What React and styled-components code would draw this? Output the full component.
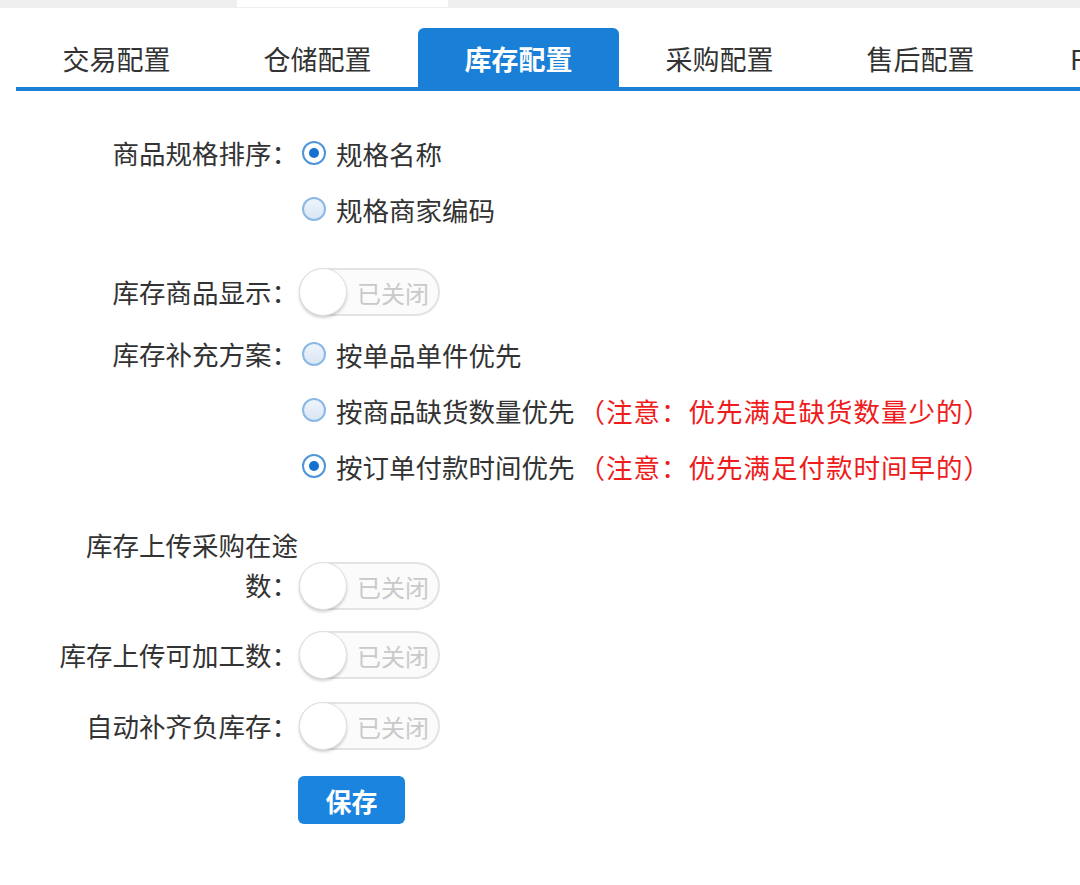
import React, { useState } from 'react';
import styled, { createGlobalStyle } from 'styled-components';

const GlobalStyle = createGlobalStyle`
  body {
    margin: 0;
    background: #fff;
    font-family: 'Noto Sans CJK SC', 'Noto Sans', sans-serif;
    color: #333;
  }
`;

const TABS = ['交易配置', '仓储配置', '库存配置', '采购配置', '售后配置', 'FBA配置'];

const App = () => {
  const [activeTab, setActiveTab] = useState(2);
  const [specSort, setSpecSort] = useState('name');
  const [plan, setPlan] = useState('payTime');
  const [switches, setSwitches] = useState({ show: false, transit: false, process: false, negative: false });

  const toggle = (key) => setSwitches((prev) => ({ ...prev, [key]: !prev[key] }));

  return (
    <Page>
      <GlobalStyle />
      <TopStrip>
        <TopTab />
      </TopStrip>

      <TabBar>
        {TABS.map((tab, i) => (
          <Tab key={tab} active={i === activeTab ? 'true' : undefined} onClick={() => setActiveTab(i)}>
            {tab}
          </Tab>
        ))}
      </TabBar>

      <Form>
        <Row>
          <Label>商品规格排序：</Label>
          <Options>
            <Option onClick={() => setSpecSort('name')}>
              <Radio checked={specSort === 'name'} />
              规格名称
            </Option>
            <Option onClick={() => setSpecSort('code')}>
              <Radio checked={specSort === 'code'} />
              规格商家编码
            </Option>
          </Options>
        </Row>

        <Row space={27}>
          <Label>库存商品显示：</Label>
          <Switch on={switches.show} onClick={() => toggle('show')} />
        </Row>

        <Row space={6}>
          <Label>库存补充方案：</Label>
          <Options>
            <Option onClick={() => setPlan('single')}>
              <Radio checked={plan === 'single'} />
              按单品单件优先
            </Option>
            <Option onClick={() => setPlan('shortage')}>
              <Radio checked={plan === 'shortage'} />
              按商品缺货数量优先<Note>（注意：优先满足缺货数量少的）</Note>
            </Option>
            <Option onClick={() => setPlan('payTime')}>
              <Radio checked={plan === 'payTime'} />
              按订单付款时间优先<Note>（注意：优先满足付款时间早的）</Note>
            </Option>
          </Options>
        </Row>

        <Row space={31} bottom>
          <Label>库存上传采购在途数：</Label>
          <Switch drop={5} on={switches.transit} onClick={() => toggle('transit')} />
        </Row>

        <Row space={22}>
          <Label>库存上传可加工数：</Label>
          <Switch on={switches.process} onClick={() => toggle('process')} />
        </Row>

        <Row space={15}>
          <Label>自动补齐负库存：</Label>
          <Switch on={switches.negative} onClick={() => toggle('negative')} />
        </Row>

        <Row space={22}>
          <Label />
          <SaveButton>保存</SaveButton>
        </Row>
      </Form>
    </Page>
  );
};

const Radio = ({ checked }) => (
  <RadioCircle checked={checked}>{checked && <RadioDot />}</RadioCircle>
);

const Switch = ({ on, onClick, drop = 0 }) => (
  <SwitchTrack on={on ? 'true' : undefined} drop={drop} onClick={onClick}>
    <SwitchKnob on={on ? 'true' : undefined} />
    <SwitchText on={on ? 'true' : undefined}>{on ? '已开启' : '已关闭'}</SwitchText>
  </SwitchTrack>
);

export default App;

const Page = styled.div`
  width: 1080px;
  height: 885px;
  overflow: hidden;
  background: #fff;
`;

const TopStrip = styled.div`
  height: 8px;
  background: #efefef;
  padding-left: 237px;
`;

const TopTab = styled.div`
  width: 211px;
  height: 7px;
  background: #fff;
`;

const TabBar = styled.div`
  display: flex;
  margin: 20px 0 0 16px;
  border-bottom: 4px solid #1a7fd6;
  overflow: hidden;
`;

const Tab = styled.div`
  flex: 0 0 201px;
  height: 59px;
  display: flex;
  align-items: center;
  justify-content: center;
  padding-top: 2px;
  box-sizing: border-box;
  font-size: 27px;
  font-weight: ${(props) => (props.active ? 700 : 400)};
  color: ${(props) => (props.active ? '#fff' : '#333')};
  background: ${(props) => (props.active ? '#1a7fd6' : 'transparent')};
  border-radius: 6px 6px 0 0;
  cursor: pointer;
`;

const Form = styled.div`
  padding: 34px 0 0 53px;
`;

const Row = styled.div`
  display: flex;
  align-items: ${(props) => (props.bottom ? 'flex-end' : 'flex-start')};
  margin-top: ${(props) => props.space || 0}px;
`;

const Label = styled.div`
  flex: 0 0 245px;
  text-align: right;
  font-size: 26.5px;
  line-height: ${(props) => (props.children && props.children.length > 9 ? 40 : 56)}px;
  color: #333;
`;

const Options = styled.div`
  display: flex;
  flex-direction: column;
`;

const Option = styled.div`
  display: flex;
  align-items: center;
  height: 56px;
  font-size: 26.5px;
  color: #333;
  white-space: nowrap;
  cursor: pointer;
`;

const RadioCircle = styled.span`
  width: 20px;
  height: 20px;
  margin: 0 10px 0 4px;
  border-radius: 50%;
  border: 2px solid ${(props) => (props.checked ? '#4f95da' : '#8bb8e6')};
  background: ${(props) => (props.checked ? '#fff' : 'linear-gradient(#eef4fb, #d9e6f5)')};
  display: flex;
  align-items: center;
  justify-content: center;
  box-sizing: content-box;
`;

const RadioDot = styled.span`
  width: 10px;
  height: 10px;
  border-radius: 50%;
  background: #1571cf;
`;

const Note = styled.span`
  color: #ee1c1c;
  letter-spacing: 1px;
  margin-left: 4px;
`;

const SwitchTrack = styled.div`
  position: relative;
  width: 141px;
  height: 48px;
  margin-top: 4px;
  margin-bottom: ${(props) => -props.drop}px;
  margin-left: 1px;
  box-sizing: border-box;
  border: 2px solid #e3e3e3;
  border-radius: 24px;
  background: ${(props) => (props.on ? '#1a7fd6' : '#fbfbfb')};
  cursor: pointer;
`;

const SwitchKnob = styled.span`
  position: absolute;
  top: -2px;
  left: ${(props) => (props.on ? '93px' : '-2px')};
  width: 48px;
  height: 48px;
  border-radius: 50%;
  background: #fff;
  border: 1px solid #e0e0e0;
  box-sizing: border-box;
  box-shadow: 0 2px 3px rgba(0, 0, 0, 0.18);
`;

const SwitchText = styled.span`
  position: absolute;
  top: 0;
  bottom: 0;
  left: ${(props) => (props.on ? '12px' : '56px')};
  display: flex;
  align-items: center;
  font-size: 24px;
  color: ${(props) => (props.on ? '#fff' : '#c9c9c9')};
`;

const SaveButton = styled.button`
  width: 107px;
  height: 48px;
  border: none;
  border-radius: 6px;
  background: #1a84de;
  color: #fff;
  font-family: 'Noto Sans CJK SC', sans-serif;
  font-size: 26px;
  font-weight: 700;
  cursor: pointer;
`;
